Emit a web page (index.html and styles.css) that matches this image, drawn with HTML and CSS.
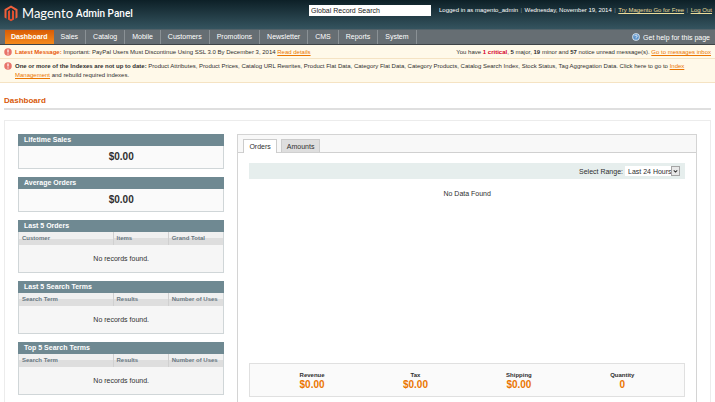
FILE: index.html
```html
<!doctype html>
<html lang="en">
  <head>
    <meta charset="UTF-8" />
    <title>Dashboard / Magento Admin</title>
    <link rel="stylesheet" href="styles.css">
  </head>
  <body>
    <header class="header">
      <div class="logo">
        <svg class="logo-mark" viewBox="0 0 28 34" aria-hidden="true">
          <path d="M14 1 27 8.500V25l-4 2.300V11L14 5.700 5 11v16.300L1 25V8.500z" fill="#f0603c" />
          <path d="M8 12.500 12 10v17.500l2 1.200 2-1.200V10l4 2.500V29l-6 3.700L8 29z" fill="#e2502f" />
        </svg>
        <span class="logo-name">Magento</span>
        <span class="logo-panel">Admin Panel</span>
      </div>
      <input class="search" type="text" value="Global Record Search" aria-label="Global Record Search" />
      <div class="account">
        <span>Logged in as magento_admin</span>
        <i>|</i>
        <span>Wednesday, November 19, 2014</span>
        <i>|</i>
        <a href="#">Try Magento Go for Free</a>
        <i>|</i>
        <a href="#">Log Out</a>
      </div>
    </header>

    <nav class="nav">
      <ul>
        <li class="active"><a href="#">Dashboard</a></li>
        <li><a href="#">Sales</a></li>
        <li><a href="#">Catalog</a></li>
        <li><a href="#">Mobile</a></li>
        <li><a href="#">Customers</a></li>
        <li><a href="#">Promotions</a></li>
        <li><a href="#">Newsletter</a></li>
        <li><a href="#">CMS</a></li>
        <li><a href="#">Reports</a></li>
        <li><a href="#">System</a></li>
      </ul>
      <a class="help" href="#">
        <svg viewBox="0 0 16 16" aria-hidden="true">
          <circle cx="8" cy="8" r="7.500" fill="#dcebf8" />
          <circle cx="8" cy="8" r="5.800" fill="#5d93c9" />
          <path d="M5.800 6.300a2.200 2.200 0 1 1 3.400 1.800C8.300 8.700 8 9 8 10M8 11.300v1.500" fill="none" stroke="#fff" stroke-width="1.700" />
        </svg>
        Get help for this page
      </a>
    </nav>

    <div class="notice">
      <svg viewBox="0 0 16 16" aria-hidden="true">
        <circle cx="8" cy="8" r="7.500" fill="#e8736a" />
        <path d="M8 3v6M8 10.800v2.400" stroke="#fff" stroke-width="2.400" />
      </svg>
      <p><strong class="latest">Latest Message:</strong> Important: PayPal Users Must Discontinue Using SSL 3.0 By December 3, 2014 <a href="#">Read details</a></p>
      <p class="unread">You have <strong class="critical">1 critical</strong>, <strong>5</strong> major, <strong>19</strong> minor and <strong>57</strong> notice unread message(s). <a href="#">Go to messages inbox</a></p>
    </div>
    <div class="notice notice-index">
      <svg viewBox="0 0 16 16" aria-hidden="true">
        <circle cx="8" cy="8" r="7.500" fill="#e8736a" />
        <path d="M8 3v6M8 10.800v2.400" stroke="#fff" stroke-width="2.400" />
      </svg>
      <p><strong>One or more of the Indexes are not up to date:</strong> Product Attributes, Product Prices, Catalog URL Rewrites, Product Flat Data, Category Flat Data, Category Products, Catalog Search Index, Stock Status, Tag Aggregation Data. Click here to go to <a href="#">Index Management</a> and rebuild required indexes.</p>
    </div>

    <h1>Dashboard</h1>

    <main class="dashboard">
      <aside class="sidebar">
        <section class="box">
          <h2>Lifetime Sales</h2>
          <p class="amount">$0.00</p>
        </section>
        <section class="box">
          <h2>Average Orders</h2>
          <p class="amount">$0.00</p>
        </section>
        <section class="box">
          <h2>Last 5 Orders</h2>
          <table>
            <thead>
              <tr><th class="wide">Customer</th><th>Items</th><th>Grand Total</th></tr>
            </thead>
            <tbody>
              <tr><td colspan="3">No records found.</td></tr>
            </tbody>
          </table>
        </section>
        <section class="box">
          <h2>Last 5 Search Terms</h2>
          <table>
            <thead>
              <tr><th class="wide">Search Term</th><th>Results</th><th>Number of Uses</th></tr>
            </thead>
            <tbody>
              <tr><td colspan="3">No records found.</td></tr>
            </tbody>
          </table>
        </section>
        <section class="box">
          <h2>Top 5 Search Terms</h2>
          <table>
            <thead>
              <tr><th class="wide">Search Term</th><th>Results</th><th>Number of Uses</th></tr>
            </thead>
            <tbody>
              <tr><td colspan="3">No records found.</td></tr>
            </tbody>
          </table>
        </section>
      </aside>

      <section class="chart">
        <div class="tabs">
          <button class="active" type="button">Orders</button>
          <button type="button">Amounts</button>
        </div>
        <div class="chart-body">
          <div class="range">
            <label for="range">Select Range:</label>
            <div class="select">
              <select id="range">
                <option>Last 24 Hours</option>
              </select>
              <svg viewBox="0 0 10 10" aria-hidden="true">
                <path d="M2.500 4 5 6.500 7.500 4" fill="none" stroke="#333" stroke-width="1.500" />
              </svg>
            </div>
          </div>
          <p class="no-data">No Data Found</p>
          <dl class="totals">
            <div><dt>Revenue</dt><dd>$0.00</dd></div>
            <div><dt>Tax</dt><dd>$0.00</dd></div>
            <div><dt>Shipping</dt><dd>$0.00</dd></div>
            <div><dt>Quantity</dt><dd>0</dd></div>
          </dl>
        </div>
      </section>
    </main>
  </body>
</html>
```
FILE: styles.css
```css
* {
  box-sizing: border-box;
  margin: 0;
  padding: 0;
}
body {
  display: flex;
  flex-direction: column;
  min-height: 100vh;
  background: #fff;
  color: #2f2f2f;
  font: 7px/9px "Liberation Sans", Arial, sans-serif;
}
button,
input,
select {
  font: inherit;
  color: inherit;
}

/* header */
.header {
  display: flex;
  align-items: flex-start;
  height: 29px;
  padding: 5px 3px 0 4px;
  background: linear-gradient(#0d2027, #35545f);
  color: #fff;
}
.logo {
  display: flex;
  flex: 1;
  align-items: center;
  height: 17px;
}
.logo-mark {
  width: 14px;
  height: 17px;
  margin-right: 4px;
}
.logo-name {
  margin-right: 3px;
  font: 13px/17px Lato, sans-serif;
}
.logo-panel {
  font: 500 10px/17px Roboto, sans-serif;
}
.search {
  width: 122px;
  height: 11px;
  margin-right: 8px;
  padding: 0 2px;
  border: 0;
  background: #fff;
  color: #222;
}
.account {
  display: flex;
  justify-content: space-between;
  width: 273px;
  font-size: 6px;
  line-height: 11px;
  white-space: nowrap;
}
.account i {
  color: #7d939b;
  font-style: normal;
}
.account a {
  color: #ebdc9a;
}

/* menu */
.nav {
  display: flex;
  justify-content: space-between;
  height: 16px;
  padding: 0 5px;
  border-top: 1px solid #536269;
  border-bottom: 1px solid #3e4447;
  background: #666e73;
}
.nav ul {
  display: flex;
  list-style: none;
}
.nav li {
  padding: 0 7px;
  border-right: 1px solid #8a9195;
  line-height: 14px;
}
.nav a {
  color: #fff;
  text-decoration: none;
}
.nav .active {
  padding: 0 6px;
  border-right: 0;
  background: linear-gradient(#d95c06, #f58a1c);
  font-weight: bold;
}
.help {
  display: flex;
  align-items: center;
  gap: 3px;
}
.help svg {
  width: 8px;
  height: 8px;
}

/* notices */
.notice {
  display: flex;
  padding: 3px 4px 1px;
  border-bottom: 1px solid #f5e3c3;
  background: #fff9e9;
  font-size: 6px;
}
.notice svg {
  flex: none;
  width: 8px;
  height: 8px;
  margin-right: 3px;
}
.notice a {
  color: #ea7601;
}
.notice-index {
  padding: 3px 30px 2px 4px;
}
.unread {
  margin-left: auto;
}
.latest {
  color: #e8590c;
}
.critical {
  color: #d5002b;
}

h1 {
  margin: 12px 4px 10px;
  padding-bottom: 2px;
  border-bottom: 2px solid #dfdfdf;
  color: #d85909;
  font-size: 8px;
  line-height: 11px;
}

.dashboard {
  display: flex;
  flex: 1;
  gap: 13px;
  margin: 0 4px;
  padding: 13px 13px 0;
  border: 1px solid #ececec;
  border-bottom: 0;
}

/* left column */
.sidebar {
  display: flex;
  flex: 207;
  flex-direction: column;
  gap: 8px;
}
.box {
  border: 1px solid #d0d6d8;
  border-top: 0;
  background: #fafafa;
}
.box h2 {
  margin: 0 -1px;
  padding: 0 6px;
  background: #6f8992;
  color: #fff;
  font-size: 7px;
  line-height: 12px;
}
.amount {
  font-size: 10px;
  font-weight: bold;
  line-height: 22px;
  text-align: center;
}
.box table {
  width: 100%;
  border-collapse: collapse;
  table-layout: fixed;
}
.box th {
  padding: 0 3px;
  border-left: 1px solid #d0d0d0;
  background: linear-gradient(#f0f0f0 50%, #dedede 50%);
  color: #67767e;
  font-size: 6px;
  line-height: 13px;
  text-align: left;
  white-space: nowrap;
}
.box th.wide {
  width: 46%;
  border-left: 0;
}
.box td {
  background: #f6f6f6;
  line-height: 27px;
  text-align: center;
}

/* chart */
.chart {
  display: flex;
  flex: 459;
  flex-direction: column;
  border: 1px solid #d4d4d4;
  border-bottom: 0;
}
.tabs {
  display: flex;
  gap: 4px;
  height: 18px;
  padding: 4px 5px 0;
  border-bottom: 1px solid #d0d0d0;
  background: #f8f8f8;
}
.tabs button {
  padding: 0 5px;
  border: 1px solid #ccc;
  border-bottom: 0;
  background: #dedede;
}
.tabs .active {
  margin-bottom: -1px;
  background: #fff;
}
.chart-body {
  display: flex;
  flex: 1;
  flex-direction: column;
  padding: 10px 11px 5px;
}
.range {
  display: flex;
  align-items: center;
  justify-content: flex-end;
  gap: 2px;
  height: 16px;
  padding-right: 5px;
  background: #e6eeed;
}
.select {
  position: relative;
}
.select select {
  width: 55px;
  height: 10px;
  padding-left: 3px;
  border: 0;
  background: #fff;
  appearance: none;
}
.select svg {
  position: absolute;
  top: 0;
  right: 0;
  width: 9px;
  height: 10px;
  border: 1px solid #a5a5a5;
  background: #e8e8e8;
  pointer-events: none;
}
.no-data {
  padding-top: 10px;
  text-align: center;
}
.totals {
  display: grid;
  grid-template-columns: repeat(4, 1fr);
  margin-top: auto;
  padding: 7px 10px 6px;
  border: 1px solid #e0e0e0;
  background: #fafafa;
  font-weight: bold;
  text-align: center;
}
.totals dt {
  font-size: 6px;
}
.totals dd {
  color: #ea7601;
  font-size: 10px;
  line-height: 10px;
}
```
